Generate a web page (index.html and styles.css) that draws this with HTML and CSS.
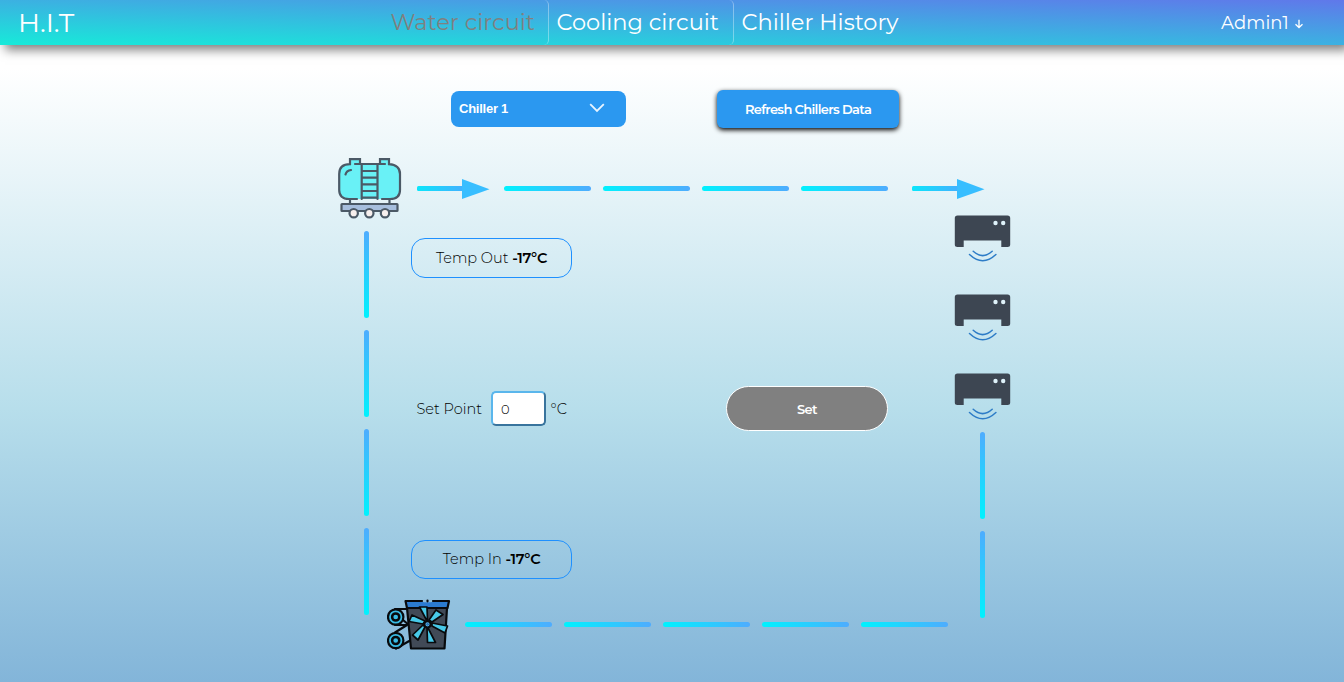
FILE: index.html
```html
<!DOCTYPE html>
<html lang="en">
<head>
<meta charset="utf-8">
<title>H.I.T</title>
<link rel="stylesheet" href="styles.css">
</head>
<body>
<svg class="defs" width="0" height="0" aria-hidden="true">
  <defs>
    <linearGradient id="flow" x1="0" x2="1" y1="0" y2="0"><stop offset="0" stop-color="#0be6fb"/><stop offset="1" stop-color="#47acff"/></linearGradient>
    <symbol id="arrow" viewBox="0 0 73 20">
      <rect x="0" y="7" width="50" height="5" rx="1.5" fill="url(#flow)"/>
      <path d="M45 0L72.500 10.3L45 20Z" fill="#38beff"/>
    </symbol>
    <symbol id="unit" viewBox="0 0 57 48">
      <path d="M3.500 .5H53.500Q56.200 .5 56.200 3V29.500Q56.200 32 53.500 32H47.300V25.500H9.700V32H3.500Q.8 32 .8 29.500V3Q.8 .5 3.500 .5Z" fill="#3d4652"/>
      <circle cx="41.500" cy="8" r="2.200" fill="#dff2fa"/><circle cx="49.200" cy="8" r="2.200" fill="#dff2fa"/>
      <path d="M19.200 36.300Q28.700 45 38.200 36.300M15.500 39.500Q28.700 52 41.900 39.500" fill="none" stroke="#2d7cc7" stroke-width="1.500" stroke-linecap="round"/>
    </symbol>
  </defs>
</svg>
<header class="bar">
  <div class="brand">H.I.T</div>
  <nav class="nav">
    <a class="tab tab-active">Water circuit</a>
    <a class="tab">Cooling circuit</a>
    <a class="tab tab-last">Chiller History</a>
  </nav>
  <div class="user"><span class="user-name">Admin1</span>
    <svg width="10" height="10" viewBox="0 0 10 10"><path d="M5 .8V8.500M1.500 5.300L5 8.500L8.500 5.300" fill="none" stroke="#fff" stroke-width="1.300"/></svg>
  </div>
</header>
<main class="page">
  <div class="controls">
    <div class="select">Chiller 1
      <svg width="16" height="10" viewBox="0 0 16 10"><path d="M1.200 1.200L8 8L14.800 1.200" fill="none" stroke="#e8f4ff" stroke-width="1.800"/></svg>
    </div>
    <button class="refresh">Refresh Chillers Data</button>
  </div>
  <section class="plant">
    <div class="supply">
      <svg class="tank" width="64" height="62" viewBox="0 0 64 62" fill="none" stroke="#4b5966" stroke-width="2.200" stroke-linecap="round">
        <path d="M12 43V47M51.500 43V47"/>
        <path d="M12 7V2.200H22V7H42V2.200H51V7.200Q62 8 62 17V33Q62 42 52 42H11Q1.200 42 1.200 33V17Q1.200 7.200 12 7.200Z" fill="#69f1f6" stroke="none"/>
        <path d="M19 42H11Q1.200 42 1.200 33V17Q1.200 7.200 12 7.200V2.200H22V7M42 7V2.200H51V7.200Q62 8 62 17V33Q62 42 52 42H44M17 7H47"/>
        <path d="M23.700 7V42M39.500 7V42M24 14H39M24 20.700H39M24 27.300H39M24 34H39M24 40.700H39"/>
        <path d="M7.500 17.500Q8.500 13.500 13 13"/>
        <rect x="3.500" y="47" width="56" height="7" rx=".5" fill="#a6bedd"/>
        <g fill="#f7efed"><circle cx="15.700" cy="56.200" r="4.200"/><circle cx="31.300" cy="56.200" r="4.200"/><circle cx="47" cy="56.200" r="4.200"/></g>
      </svg>
      <svg class="arrow" width="73" height="20"><use href="#arrow"/></svg>
      <div class="run"><i class="pipe"></i><i class="pipe"></i><i class="pipe"></i><i class="pipe"></i></div>
      <svg class="arrow arrow-end" width="73" height="20"><use href="#arrow"/></svg>
    </div>
    <div class="middle">
      <div class="riser"><i class="pipe-v"></i><i class="pipe-v"></i><i class="pipe-v"></i><i class="pipe-v"></i></div>
      <div class="readings">
        <div class="temp"><span>Temp Out <b>-17°C</b></span></div>
        <div class="setpoint">
          <label class="set-label" for="sp">Set Point</label>
          <input id="sp" class="field" value="0">
          <span class="degrees">°C</span>
          <button class="set">Set</button>
        </div>
        <div class="temp temp-in"><span>Temp In <b>-17°C</b></span></div>
      </div>
      <div class="units">
        <svg width="57" height="48"><use href="#unit"/></svg>
        <svg width="57" height="48"><use href="#unit"/></svg>
        <svg width="57" height="48"><use href="#unit"/></svg>
        <div class="drop"><i class="pipe-v"></i><i class="pipe-v"></i></div>
      </div>
    </div>
    <div class="return">
      <svg class="pump" width="64" height="52" viewBox="0 0 64 52" fill="none" stroke="#080a0d" stroke-width="2.200" stroke-linejoin="round" stroke-linecap="round">
        <path d="M8 10H22M8 26H20L8 33.500M9 49.500L24 41M16 21L22 26"/>
        <path d="M20 9H60L57.500 49.500H24Z" fill="#414a57"/>
        <path d="M18.500 2H62L60.500 9H20Z" fill="#2b7bd0"/>
        <path d="M37 2H44" stroke="#8ebdd9" stroke-width="2.600"/><path d="M40.500 1.500V2.300"/>
        <circle cx="8.700" cy="18" r="7.700" fill="#39bce5"/><circle cx="8.700" cy="18" r="3.600" fill="#39bce5" stroke-width="2.500"/>
        <circle cx="8.700" cy="41.500" r="7.700" fill="#39bce5"/><circle cx="8.700" cy="41.500" r="3.600" fill="#39bce5" stroke-width="2.500"/>
        <g fill="#48c9e8" stroke-width="1.700">
          <path d="M39.500 21L32.500 8H40L40.500 21Z"/><path d="M42 21L49 11L56 15.500L45 23Z"/><path d="M45 24L60.500 27L58 34L45 27Z"/><path d="M41 29L48.500 43.500H40.500L40 29Z"/><path d="M38 28L31 41L25.500 36L36 26Z"/><path d="M36 25L22 22.500L25 16L38 22Z"/>
        </g>
        <circle cx="40.500" cy="25.300" r="3.200" fill="#55b5ee"/><circle cx="40.500" cy="25.300" r=".8" stroke="#2668aa" stroke-width="1"/>
      </svg>
      <div class="run"><i class="pipe"></i><i class="pipe"></i><i class="pipe"></i><i class="pipe"></i><i class="pipe"></i></div>
    </div>
  </section>
</main>
</body>
</html>
```

FILE: styles.css
```css
* { box-sizing: border-box; }
body {
  margin: 0;
  height: 682px;
  overflow: hidden;
  font-family: Montserrat, Inter, "Open Sans", sans-serif;
  color: #000;
  background: linear-gradient(#fff 10%, #b7deeb 60%, #83b5d9 100%);
}
.defs { position: absolute; }
.bar {
  display: grid;
  grid-template-columns: 383px 1fr 150px;
  height: 45px;
  color: #fff;
  background: linear-gradient(to top right, #17ead9, #6078ea);
  box-shadow: 5px 5px 10px rgba(0, 0, 0, .5);
  white-space: nowrap;
}
.brand { padding-left: 18px; font-size: 27px; line-height: 45px; }
.nav { display: flex; }
.tab {
  width: 166px;
  padding-left: 7.5px;
  border-right: 1px solid rgba(255, 255, 255, .35);
  border-radius: 5px;
  font-size: 22.5px;
  line-height: 44px;
}
.tab + .tab { width: 185px; }
.tab.tab-last { border: 0; }
.tab-active { color: #808080; }
.user { display: flex; align-items: center; gap: 5px; padding-left: 27px; font-size: 18px; }
.user-name { letter-spacing: .1px; }
.user svg { margin-top: 3px; }

.controls { display: flex; align-items: flex-start; padding: 45px 0 0 451px; }
.select {
  display: flex;
  align-items: center;
  justify-content: space-between;
  width: 175px;
  height: 36px;
  margin-top: 1px;
  padding: 0 21px 2px 8px;
  border-radius: 8px;
  background: #2b98f0;
  color: #fff;
  font: bold 13px "Liberation Sans", sans-serif;
  letter-spacing: -.25px;
}
.refresh {
  width: 182px;
  height: 38px;
  margin-left: 91px;
  padding: 0 0 1px;
  border: 0;
  border-radius: 6px;
  background: #2b98f0;
  box-shadow: 0 2px 5px #000;
  color: #fff;
  font: 600 13px Montserrat, Inter, sans-serif;
  letter-spacing: -.66px;
}

.plant { width: 673px; margin-left: 338px; }
.supply { display: flex; height: 87px; padding-top: 29px; }
.supply .arrow { margin: 22px 0 0 15px; }
.supply .run { margin: 29px 0 0 14px; }
.supply .arrow-end { margin-left: 24px; }
.run { display: flex; gap: 12px; height: 5px; }
.pipe { width: 87px; height: 5px; border-radius: 3px; background: linear-gradient(to right, #00f2fe, #4facfe); }
.pipe-v { flex: none; width: 5px; height: 87px; border-radius: 3px; background: linear-gradient(#4facfe, #00f2fe); }
.middle { display: flex; height: 383px; }
.riser { display: flex; flex-direction: column; gap: 12px; width: 73px; padding: 16px 0 0 26px; }
.readings { width: 543px; padding-top: 23px; font-size: 14.5px; font-weight: 300; white-space: nowrap; }
.temp {
  display: flex;
  align-items: center;
  justify-content: center;
  width: 161px;
  height: 40px;
  padding-bottom: 1px;
  border: 1px solid #1e90ff;
  border-radius: 14px;
}
.temp-in { height: 39px; }
.temp b { font-weight: 600; letter-spacing: -.3px; }
.setpoint { display: flex; align-items: center; height: 45px; margin: 108px 0 109px; padding-left: 5.5px; }
.set-label { width: 74.5px; }
.field {
  width: 55px;
  height: 35px;
  padding: 0 8px;
  border: 2px solid;
  border-color: #5ab6ec #39749d #39749d #5ab6ec;
  border-radius: 5px;
  background: #fff;
  font: 300 13px Montserrat, Inter, sans-serif;
}
.degrees { width: 180px; padding-left: 4.5px; }
.set {
  width: 162px;
  height: 45px;
  border: 1px solid #fff;
  border-radius: 23px;
  background: #808080;
  color: #fff;
  font: 600 13px Montserrat, Inter, sans-serif;
  letter-spacing: -.6px;
}
.units { display: flex; flex-direction: column; gap: 31px; }
.units svg { display: block; flex: none; }
.drop { display: flex; flex-direction: column; gap: 12px; padding-left: 26px; margin-top: -20px; }
.return { display: flex; height: 60px; padding-left: 49px; }
.pump { margin-top: 1px; }
.return .run { margin: 24px 0 0 14px; }
```
